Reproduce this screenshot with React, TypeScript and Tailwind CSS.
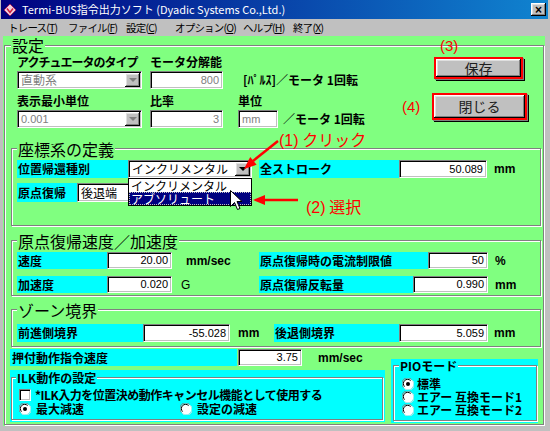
import type { ReactNode } from "react";

const jp = "font-['Noto_Sans_CJK_JP',sans-serif]";
const lat = "font-['Liberation_Sans',Arial,sans-serif]";
const sunken =
  "border border-t-[#808080] border-l-[#808080] border-b-white border-r-white shadow-[inset_1px_1px_0_#000,inset_-1px_-1px_0_#c0c0c0]";
const raised =
  "bg-[#c0c0c0] shadow-[inset_-1px_-1px_0_#000,inset_1px_1px_0_#fff,inset_-2px_-2px_0_#808080,inset_2px_2px_0_#dfdfdf]";
const groove = "border border-[#808080] shadow-[inset_1px_1px_0_#fff,1px_1px_0_#fff]";

interface FieldProps {
  className?: string;
  value: string;
  dim?: boolean;
  left?: boolean;
}

const Field = ({ className = "", value, dim, left }: FieldProps) => (
  <div
    className={`flex shrink-0 items-center bg-white ${sunken} ${
      left ? "justify-start pl-[3px]" : "justify-end pr-[3px]"
    } ${dim ? "text-[#808080]" : "text-black"} ${lat} text-[11px] ${className}`}
  >
    {value}
  </div>
);

const DropArrow = ({ dim }: { dim?: boolean }) => (
  <div className={`flex h-full w-[15px] shrink-0 items-center justify-center ${raised}`}>
    <div
      className={`h-0 w-0 border-x-[4px] border-t-[4px] border-x-transparent ${
        dim ? "border-t-[#808080]" : "border-t-black"
      }`}
    />
  </div>
);

interface ComboProps {
  className?: string;
  value: string;
  dim?: boolean;
  latin?: boolean;
  children?: ReactNode;
}

const Combo = ({ className = "", value, dim, latin, children }: ComboProps) => (
  <div className={`relative flex shrink-0 bg-white p-[1px] ${sunken} ${className}`}>
    <div
      className={`flex flex-1 items-center pl-[2px] ${dim ? "text-[#808080]" : "text-black"} ${
        latin ? `${lat} text-[11px]` : "text-[12px]"
      }`}
    >
      {value}
    </div>
    <DropArrow dim={dim} />
    {children}
  </div>
);

const Cyan = ({ className = "", children }: { className?: string; children: ReactNode }) => (
  <div
    className={`flex shrink-0 items-center bg-[#00ffff] pl-[1px] text-[12px] leading-none font-bold whitespace-nowrap ${className}`}
  >
    {children}
  </div>
);

const Unit = ({ className = "", children, bold = true }: { className?: string; children: ReactNode; bold?: boolean }) => (
  <div className={`flex shrink-0 items-center ${lat} text-[12px] ${bold ? "font-bold" : ""} ${className}`}>
    {children}
  </div>
);

const Group = ({ title, className = "", children }: { title: string; className?: string; children: ReactNode }) => (
  <div className={`${groove} ${className}`}>
    <div className="-mt-[8px] ml-[5px] w-fit bg-[#80ff80] px-[1px] text-[16px] leading-[16px]">{title}</div>
    {children}
  </div>
);

const Radio = ({ checked }: { checked?: boolean }) => (
  <svg width="12" height="12" viewBox="0 0 12 12" className="shrink-0">
    <circle cx="6" cy="6" r="5.5" fill="#fff" />
    <path d="M1.5 9.5 A5 5 0 0 1 9.5 1.5" stroke="#808080" strokeWidth="1" fill="none" />
    <path d="M2.6 8.6 A3.8 3.8 0 0 1 8.6 2.6" stroke="#000" strokeWidth="1" fill="none" />
    <path d="M10.5 2.5 A5 5 0 0 1 2.5 10.5" stroke="#dfdfdf" strokeWidth="1" fill="none" />
    {checked && <circle cx="6" cy="6" r="2" fill="#000" />}
  </svg>
);

const TitleBar = () => (
  <div className="ml-[1px] flex h-[19px] w-[547px] items-center bg-[linear-gradient(to_right,#000080,#1084d0)] pl-[2px]">
    <svg width="14" height="14" viewBox="0 0 14 14" className="shrink-0">
      <polygon points="7,1 13,7 7,13 1,7" fill="#f0d0e0" stroke="#a02060" strokeWidth="1" />
      <path d="M4 5.5 L7 9.5 L10 5.5" stroke="#d02040" strokeWidth="1.6" fill="none" />
    </svg>
    <span className="ml-[5px] text-[11px] leading-none text-white">
      Termi-BUS指令出力ソフト (Dyadic Systems Co.,Ltd.)
    </span>
    <div
      className={`mr-[2px] ml-auto flex h-[13px] w-[15px] items-center justify-center ${raised} ${lat} text-[12px] leading-none font-bold text-black`}
    >
      ×
    </div>
  </div>
);

const MenuBar = () => (
  <div className="flex h-[17px] items-center pl-[8px] text-[10.5px] tracking-[-0.8px] whitespace-nowrap text-black">
    <span className="w-[60px] shrink-0">
      トレース(<u>T</u>)
    </span>
    <span className="w-[58px] shrink-0">
      ファイル(<u>F</u>)
    </span>
    <span className="w-[49px] shrink-0">
      設定(<u>C</u>)
    </span>
    <span className="w-[68px] shrink-0">
      オプション(<u>O</u>)
    </span>
    <span className="w-[50px] shrink-0">
      ヘルプ(<u>H</u>)
    </span>
    <span className="shrink-0">
      終了(<u>X</u>)
    </span>
  </div>
);

const RedButton = ({ className = "", children }: { className?: string; children: ReactNode }) => (
  <div className={`shadow-[1px_1px_0_#808080,2px_2px_0_#000] ${className}`}>
    <div className={`flex h-full w-full items-center justify-center border-2 border-[#ff0000] ${raised} text-[14px] text-[#202020]`}>
      {children}
    </div>
  </div>
);

const Overlay = () => (
  <div className="pointer-events-none absolute inset-0 z-20">
    <div className={`absolute top-[35px] left-[440px] ${lat} text-[15px] text-[#ff0000]`}>(3)</div>
    <div className={`absolute top-[96px] left-[402px] ${lat} text-[15px] text-[#ff0000]`}>(4)</div>
    <div className="absolute top-[127px] left-[279px] text-[16px] text-[#ff0000]">
      <span className={lat}>(1)</span> クリック
    </div>
    <div className="absolute top-[194px] left-[306px] text-[16px] text-[#ff0000]">
      <span className={lat}>(2)</span> 選択
    </div>
    <svg className="absolute top-0 left-0" width="550" height="431">
      <line x1="278" y1="141" x2="253" y2="161" stroke="#ff0000" strokeWidth="2.5" />
      <polygon points="244,169 256.6,164.7 250.2,157.1" fill="#ff0000" />
      <line x1="298" y1="200" x2="263" y2="200" stroke="#ff0000" strokeWidth="2.5" />
      <polygon points="253,200 265,195 265,205" fill="#ff0000" />
      <path
        d="M230.5 190.5 L230.5 206.5 L234.5 202.5 L237.5 209.5 L240 208.5 L237 201.5 L242 201.5 Z"
        fill="#fff"
        stroke="#000"
        strokeWidth="1"
      />
    </svg>
  </div>
);

export default function App() {
  return (
    <div className={`relative h-[431px] w-[550px] overflow-hidden bg-[#c0c0c0] ${jp} text-black`}>
      <TitleBar />
      <MenuBar />
      <div className="ml-[3px] h-[390px] w-[542px] bg-[#80ff80] pt-[9px] pl-[1px]">
        <div className={`h-[380px] w-[540px] ${groove}`}>
          <div className="-mt-[9px] ml-[6px] w-fit bg-[#80ff80] px-[1px] text-[16px] leading-[16px]">設定</div>

          <div className="mt-[2px] flex">
            <div className="ml-[12px] w-[360px] shrink-0">
              <div className="flex h-[14px] items-center text-[12px] font-bold whitespace-nowrap">
                <span className="w-[133px] shrink-0 tracking-[-1px]">アクチュエータのタイプ</span>
                <span>モータ分解能</span>
              </div>
              <div className="mt-[2px] flex h-[18px]">
                <Combo className="w-[125px]" value="直動系" dim />
                <Field className="ml-[8px] w-[73px]" value="800" dim />
                <div className="ml-[20px] flex items-center text-[12px] font-bold whitespace-nowrap">
                  [ﾊﾟﾙｽ]／モータ 1回転
                </div>
              </div>
              <div className="mt-[5px] flex h-[14px] items-center text-[12px] font-bold">
                <span className="w-[133px] shrink-0">表示最小単位</span>
                <span className="w-[88px] shrink-0">比率</span>
                <span>単位</span>
              </div>
              <div className="mt-[2px] flex h-[18px]">
                <Combo className="w-[125px]" value="0.001" dim latin />
                <Field className="ml-[8px] w-[73px]" value="3" dim />
                <Field className="ml-[15px] w-[40px]" value="mm" dim left />
                <div className="ml-[5px] flex items-center text-[12px] font-bold whitespace-nowrap">
                  ／モータ 1回転
                </div>
              </div>
            </div>
            <div className="ml-[55px] flex flex-col items-start">
              <RedButton className="mt-[2px] ml-[2px] h-[22px] w-[89px]">保存</RedButton>
              <RedButton className="mt-[14px] h-[27px] w-[95px]">閉じる</RedButton>
            </div>
          </div>

          <Group title="座標系の定義" className="mt-[20px] ml-[6px] h-[78px] w-[530px]">
            <div className="mt-[3px] ml-[5px] flex h-[18px]">
              <Cyan className="w-[111px]">位置帰還種別</Cyan>
              <Combo className="w-[124px]" value="インクリメンタル">
                <div className="absolute top-[calc(100%+1px)] -left-[1px] z-10 w-[124px] border border-black bg-white text-[12px] leading-[13px]">
                  <div className="h-[13px] pl-[2px]">インクリメンタル</div>
                  <div className="h-[13px] border border-dotted border-[#c0c0c0] bg-[#000080] pl-[1px] leading-[11px] text-white">
                    アブソリュート
                  </div>
                </div>
              </Combo>
              <Cyan className="ml-[7px] w-[140px]">全ストローク</Cyan>
              <Field className="w-[88px]" value="50.089" />
              <Unit className="ml-[7px]">mm</Unit>
            </div>
            <div className="mt-[5px] ml-[5px] flex h-[19px]">
              <Cyan className="w-[60px]">原点復帰</Cyan>
              <Combo className="w-[124px]" value="後退端" />
            </div>
          </Group>

          <Group title="原点復帰速度／加速度" className="mt-[14px] ml-[6px] h-[56px] w-[530px]">
            <div className="mt-[3px] ml-[5px] flex h-[17px]">
              <Cyan className="w-[90px]">速度</Cyan>
              <Field className="w-[65px]" value="20.00" />
              <Unit className="w-[87px] pl-[14px]">mm/sec</Unit>
              <Cyan className="w-[169px]">原点復帰時の電流制限値</Cyan>
              <Field className="w-[60px]" value="50" />
              <Unit className="pl-[7px]">%</Unit>
            </div>
            <div className="mt-[7px] ml-[5px] flex h-[17px]">
              <Cyan className="w-[90px]">加速度</Cyan>
              <Field className="w-[65px]" value="0.020" />
              <Unit className="w-[87px] pl-[9px]" bold={false}>
                G
              </Unit>
              <Cyan className="w-[154px]">原点復帰反転量</Cyan>
              <Field className="w-[75px]" value="0.990" />
              <Unit className="pl-[7px]">mm</Unit>
            </div>
          </Group>

          <Group title="ゾーン境界" className="mt-[13px] ml-[6px] h-[38px] w-[530px]">
            <div className="mt-[6px] ml-[5px] flex h-[18px]">
              <Cyan className="w-[126px]">前進側境界</Cyan>
              <Field className="w-[87px]" value="-55.028" />
              <Unit className="w-[44px] pl-[8px]">mm</Unit>
              <Cyan className="w-[125px]">後退側境界</Cyan>
              <Field className="w-[89px]" value="5.059" />
              <Unit className="pl-[6px]">mm</Unit>
            </div>
          </Group>

          <div className="mt-[2px] ml-[5px] flex items-start">
            <div className="w-[375px] shrink-0">
              <div className="flex h-[17px]">
                <Cyan className="w-[227px] pl-[2px]">押付動作指令速度</Cyan>
                <Field className="ml-[1px] w-[64px]" value="3.75" />
                <Unit className="pl-[16px]">mm/sec</Unit>
              </div>
              <div className="mt-[4px] h-[52px] w-[375px] bg-[#00ffff] pt-[7px] pr-[2px] pb-[2px] pl-[1px]">
                <div className={`h-full ${groove}`}>
                  <div className="-mt-[7px] ml-[4px] h-[13px] w-fit bg-[#00ffff] px-[1px] text-[12px] leading-[13px] font-bold">
                    ILK動作の設定
                  </div>
                  <div className="mt-[4px] ml-[7px] flex h-[13px] items-center text-[12px] leading-[13px] font-bold">
                    <div className={`h-[12px] w-[12px] shrink-0 bg-white ${sunken}`} />
                    <span className="ml-[4px] tracking-[-0.5px] whitespace-nowrap">
                      *ILK入力を位置決め動作キャンセル機能として使用する
                    </span>
                  </div>
                  <div className="mt-[1px] ml-[7px] flex h-[13px] items-center text-[12px] leading-[13px] font-bold">
                    <div className="flex w-[161px] shrink-0 items-center">
                      <Radio checked />
                      <span className="ml-[5px]">最大減速</span>
                    </div>
                    <Radio />
                    <span className="ml-[5px]">設定の減速</span>
                  </div>
                </div>
              </div>
            </div>
            <div className="mt-[10px] ml-[6px] h-[64px] w-[147px] shrink-0 bg-[#00ffff] pt-[6px] pr-[1px] pb-[2px] pl-[2px]">
              <div className={`h-full ${groove}`}>
                <div className="-mt-[7px] ml-[5px] h-[13px] w-fit bg-[#00ffff] px-[1px] text-[12px] leading-[13px] font-bold">
                  PIOモード
                </div>
                <div className="mt-[5px] ml-[8px] text-[12px] leading-[13px] font-bold whitespace-nowrap">
                  <div className="flex h-[13px] items-center">
                    <Radio checked />
                    <span className="ml-[3px]">標準</span>
                  </div>
                  <div className="flex h-[13px] items-center">
                    <Radio />
                    <span className="ml-[3px]">エアー 互換モード1</span>
                  </div>
                  <div className="flex h-[13px] items-center">
                    <Radio />
                    <span className="ml-[3px]">エアー 互換モード2</span>
                  </div>
                </div>
              </div>
            </div>
          </div>
        </div>
      </div>
      <Overlay />
    </div>
  );
}
